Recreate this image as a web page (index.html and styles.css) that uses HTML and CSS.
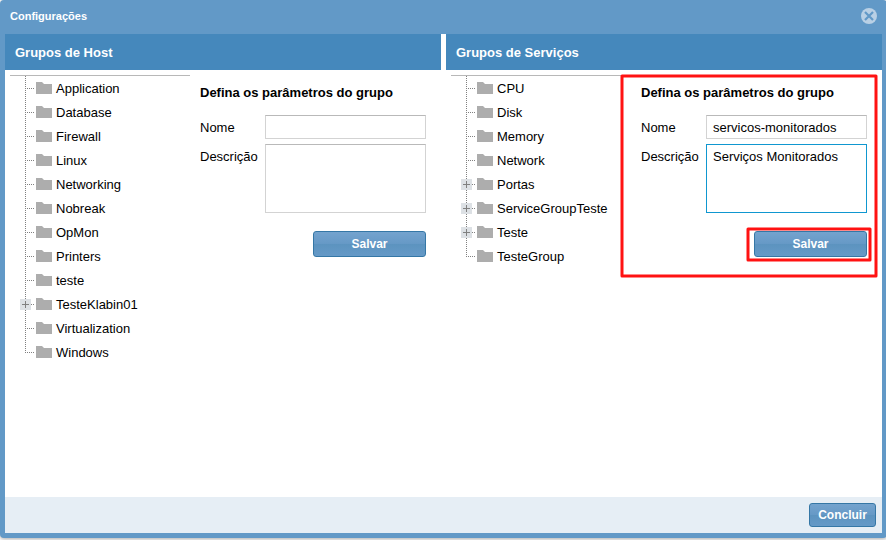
FILE: index.html
```html
<!DOCTYPE html>
<html lang="pt-BR">
<head>
<meta charset="utf-8">
<title>Configurações</title>
<link rel="stylesheet" href="styles.css">
</head>
<body>
<svg width="0" height="0" class="defs" aria-hidden="true">
  <symbol id="folder" viewBox="0 0 16 12"><path d="M0 0H6L8 2H16V12H0Z" fill="#adadad"/></symbol>
</svg>
<div class="dialog">
  <header class="titlebar">
    <h1>Configurações</h1>
    <svg class="close" width="16" height="16" viewBox="0 0 16 16"><circle cx="8" cy="8" r="8" fill="#b9d0e5"/><path d="M4 4L12 12M12 4L4 12" stroke="#6299c7" stroke-width="2.2"/></svg>
  </header>
  <main class="columns">
    <section class="panel">
      <h2>Grupos de Host</h2>
      <div class="content">
        <ul class="tree">
          <li><svg class="folder"><use href="#folder"/></svg>Application</li>
          <li><svg class="folder"><use href="#folder"/></svg>Database</li>
          <li><svg class="folder"><use href="#folder"/></svg>Firewall</li>
          <li><svg class="folder"><use href="#folder"/></svg>Linux</li>
          <li><svg class="folder"><use href="#folder"/></svg>Networking</li>
          <li><svg class="folder"><use href="#folder"/></svg>Nobreak</li>
          <li><svg class="folder"><use href="#folder"/></svg>OpMon</li>
          <li><svg class="folder"><use href="#folder"/></svg>Printers</li>
          <li><svg class="folder"><use href="#folder"/></svg>teste</li>
          <li class="closed"><svg class="folder"><use href="#folder"/></svg>TesteKlabin01</li>
          <li><svg class="folder"><use href="#folder"/></svg>Virtualization</li>
          <li><svg class="folder"><use href="#folder"/></svg>Windows</li>
        </ul>
        <form class="form">
          <h3>Defina os parâmetros do grupo</h3>
          <div class="field"><label>Nome</label><input type="text"></div>
          <div class="field area"><label>Descrição</label><textarea></textarea></div>
          <button type="button" class="btn save">Salvar</button>
        </form>
      </div>
    </section>
    <section class="panel">
      <h2>Grupos de Serviços</h2>
      <div class="content">
        <ul class="tree">
          <li><svg class="folder"><use href="#folder"/></svg>CPU</li>
          <li><svg class="folder"><use href="#folder"/></svg>Disk</li>
          <li><svg class="folder"><use href="#folder"/></svg>Memory</li>
          <li><svg class="folder"><use href="#folder"/></svg>Network</li>
          <li class="closed"><svg class="folder"><use href="#folder"/></svg>Portas</li>
          <li class="closed"><svg class="folder"><use href="#folder"/></svg>ServiceGroupTeste</li>
          <li class="closed"><svg class="folder"><use href="#folder"/></svg>Teste</li>
          <li><svg class="folder"><use href="#folder"/></svg>TesteGroup</li>
        </ul>
        <form class="form">
          <h3>Defina os parâmetros do grupo</h3>
          <div class="field"><label>Nome</label><input type="text" value="servicos-monitorados"></div>
          <div class="field area"><label>Descrição</label><textarea class="active">Serviços Monitorados</textarea></div>
          <button type="button" class="btn save">Salvar</button>
        </form>
      </div>
    </section>
  </main>
  <footer class="footer"><button type="button" class="btn done">Concluir</button></footer>
</div>
<svg class="marks" width="886" height="540" viewBox="0 0 886 540" fill="none" stroke="#ff1212" stroke-width="3" stroke-linejoin="round">
  <rect x="622" y="76" width="254" height="200"/>
  <rect x="748" y="229" width="122" height="31"/>
</svg>
</body>
</html>
```
FILE: styles.css
```css
* { box-sizing: border-box; margin: 0; padding: 0; }
body {
  width: 886px;
  height: 540px;
  overflow: hidden;
  background: #fff;
  color: #000;
  font: 13px/24px "Liberation Sans", Arial, sans-serif;
}
.defs { position: absolute; }
.dialog {
  display: flex;
  flex-direction: column;
  width: 887px;
  height: 538px;
  padding: 0 5px 5px;
  background: #6299c7;
  border-radius: 4px;
  box-shadow: 0 1px 4px rgba(0, 0, 0, .35);
}
.titlebar {
  display: flex;
  justify-content: space-between;
  align-items: center;
  height: 34px;
  padding: 0 5px 2px;
}
.titlebar h1 { color: #fff; font-size: 11px; line-height: 16px; }
.columns { display: flex; flex: 1; gap: 5px; background: #fff; }
.panel { width: 436px; }
.panel h2 {
  height: 36px;
  padding-left: 10px;
  background: #4588bc;
  color: #fff;
  font-size: 13px;
  line-height: 37px;
}
.content { display: flex; gap: 10px; padding: 5px; }
.tree { width: 180px; border-top: 1px solid #b8b8b8; list-style: none; }
.tree li {
  position: relative;
  display: flex;
  align-items: flex-start;
  height: 24px;
  padding-left: 26px;
  line-height: 25px;
}
.tree li::before {
  content: "";
  position: absolute;
  left: 15px;
  top: 0;
  width: 9px;
  height: 24px;
  background:
    repeating-linear-gradient(to bottom, #808080 0 1px, transparent 1px 2px) 0 0 / 1px 100% no-repeat,
    repeating-linear-gradient(to right, #808080 0 1px, transparent 1px 2px) 0 12px / 9px 1px no-repeat;
}
.tree li:last-child::before { height: 13px; }
.tree li.closed::after {
  content: "";
  position: absolute;
  left: 10px;
  top: 7px;
  width: 11px;
  height: 11px;
  background:
    linear-gradient(#808080, #808080) center / 7px 1px no-repeat,
    linear-gradient(#808080, #808080) center / 1px 7px no-repeat,
    #dde1e5;
}
.folder { width: 16px; height: 12px; margin: 6px 4px 0 0; }
.form { width: 226px; display: flex; flex-direction: column; }
.form h3 { height: 40px; font-size: 13px; line-height: 35px; }
.field { display: flex; height: 24px; margin-bottom: 5px; }
.field label { width: 65px; line-height: 25px; }
.field.area { height: 69px; margin-bottom: 18px; }
.field input, .field textarea {
  width: 161px;
  height: 100%;
  padding: 0 6px;
  border: 1px solid #d3d3d3;
  border-top-color: #b9b9b9;
  background: #fff;
  font: inherit;
  outline: 0;
  resize: none;
}
.field textarea { padding-top: 4px; line-height: 15px; overflow: hidden; }
.field textarea.active { border-color: #0f97d0; }
.btn {
  border: 1px solid #3577a6;
  border-radius: 3px;
  background: linear-gradient(#74a3ce, #6699c6 49%, #5c93bf 50%, #6599c7);
  color: #fff;
  font: bold 12px/22px "Liberation Sans", Arial, sans-serif;
}
.save { width: 113px; height: 26px; align-self: flex-end; }
.footer {
  display: flex;
  justify-content: flex-end;
  align-items: center;
  height: 36px;
  padding-right: 6px;
  background: #e6eef5;
}
.done { width: 67px; height: 24px; }
.marks { position: absolute; left: 0; top: 0; }
```
